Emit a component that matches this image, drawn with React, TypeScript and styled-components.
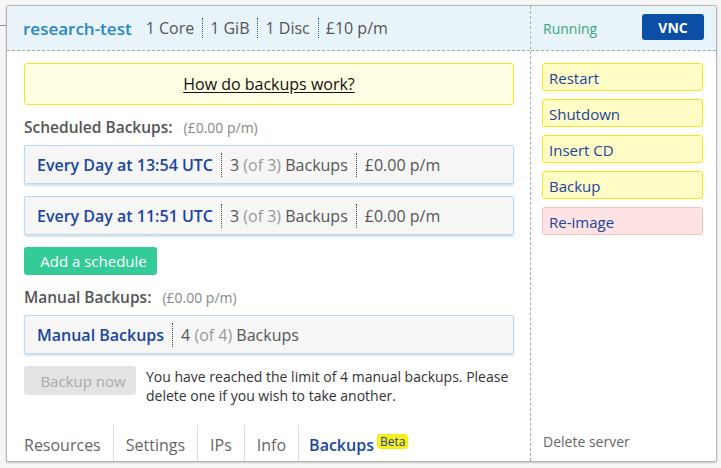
import React from "react";
import styled, { createGlobalStyle } from "styled-components";

const Global = createGlobalStyle`
  html, body { margin: 0; padding: 0; }
  body {
    background: #f6f6f6 linear-gradient(#8a8a8a, #8a8a8a) 0 25px / 8px 1px no-repeat;
    font-family: "Open Sans", "Noto Sans", sans-serif;
    width: 721px;
    height: 468px;
    overflow: hidden;
  }
`;

const Page = styled.div`
  padding: 5px 5px 0 6px;
`;

const Card = styled.div`
  width: 709px;
  height: 455px;
  background: #fff;
  border: 1px solid #b4b4b4;
  border-radius: 2px;
  box-shadow: 0 1px 2px rgba(0, 0, 0, 0.2);
  display: flex;
`;

const LeftCol = styled.div`
  width: 523px;
  display: flex;
  flex-direction: column;
  border-right: 1px dashed #aaa;
`;

const RightCol = styled.div`
  flex: 1;
  display: flex;
  flex-direction: column;
`;

const Header = styled.div`
  height: 44px;
  background: #e8f3fa;
  border-bottom: 1px dashed #a9a9a9;
  display: flex;
  align-items: center;
  flex-shrink: 0;
`;

const LeftHeader = styled(Header)`
  padding: 0 0 0 16px;
`;

const RightHeader = styled(Header)`
  padding: 0 12px 0 12px;
  justify-content: space-between;
`;

const ServerName = styled.span`
  color: #2a86c8;
  font-weight: 600;
  font-size: 17px;
  margin-right: 14px;
`;

const Spec = styled.span<{ $first?: boolean }>`
  font-size: 16px;
  color: #555;
  padding: 0 8px;
  line-height: 20px;
  border-left: ${(p) => (p.$first ? "none" : "1px dotted #2a5aa8")};
  padding-left: ${(p) => (p.$first ? "0" : "7px")};
`;

const Body = styled.div`
  flex: 1;
  padding: 12px 16px 0 17px;
  display: flex;
  flex-direction: column;
`;

const InfoBox = styled.div`
  height: 40px;
  background: #fffde4;
  border: 1px solid #f5ea1e;
  border-radius: 3px;
  display: flex;
  align-items: center;
  justify-content: center;
`;

const InfoLink = styled.a`
  color: #111;
  font-size: 16px;
  text-decoration: underline;
  text-underline-offset: 2px;
`;

const SectionTitle = styled.div<{ $top: number }>`
  margin-top: ${(p) => p.$top}px;
  height: 20px;
  display: flex;
  align-items: baseline;
  gap: 11px;
`;

const TitleText = styled.span`
  font-weight: 600;
  font-size: 15.5px;
  color: #555;
`;

const TitleCost = styled.span`
  font-size: 14px;
  color: #888;
`;

const BackupRow = styled.div<{ $top: number }>`
  margin-top: ${(p) => p.$top}px;
  height: 37px;
  background: #f6f6f6;
  border: 1px solid #b9d8f2;
  border-radius: 2px;
  box-shadow: 0 2px 2px rgba(140, 170, 200, 0.35);
  display: flex;
  align-items: center;
  padding-left: 12px;
`;

const RowCell = styled.span<{ $primary?: boolean; $first?: boolean }>`
  font-size: 16px;
  line-height: 24px;
  color: ${(p) => (p.$primary ? "#1a45a0" : "#555")};
  font-weight: ${(p) => (p.$primary ? 600 : 400)};
  padding: 0 8px 0 ${(p) => (p.$first ? "0" : "8px")};
  border-left: ${(p) => (p.$first ? "none" : "1px dotted #444")};
`;

const Muted = styled.span`
  color: #999;
`;

const Button = styled.button<{ $variant: "green" | "disabled" }>`
  height: 28px;
  border: none;
  border-radius: 3px;
  font-family: inherit;
  font-size: 15px;
  padding: 0 0 0 6px;
  background: ${(p) => (p.$variant === "green" ? "#33cb98" : "#e3e3e3")};
  color: ${(p) => (p.$variant === "green" ? "#fff" : "#aaa")};
  flex-shrink: 0;
`;

const AddButton = styled(Button)`
  margin-top: 12px;
  align-self: flex-start;
  width: 133px;
`;

const ManualActions = styled.div`
  margin-top: 12px;
  display: flex;
  gap: 10px;
  align-items: flex-start;
`;

const NowButton = styled(Button)`
  width: 112px;
  height: 29px;
`;

const LimitText = styled.p`
  margin: 0;
  font-size: 14px;
  line-height: 19px;
  color: #333;
  padding-top: 1px;
`;

const Tabs = styled.nav`
  margin: auto 0 0 -17px;
  height: 36px;
  display: flex;
  padding-left: 17px;
`;

const Tab = styled.div<{ $active?: boolean; $first?: boolean }>`
  display: flex;
  align-items: center;
  font-size: 16px;
  color: ${(p) => (p.$active ? "#1a45a0" : "#666")};
  font-weight: ${(p) => (p.$active ? 600 : 400)};
  padding: 3px 12px 0 ${(p) => (p.$first ? "0" : p.$active ? "10px" : "12px")};
  border-left: ${(p) => (p.$first ? "none" : "1px solid #ddd")};
`;

const Beta = styled.span`
  background: #f7ee17;
  color: #1a45a0;
  font-size: 12px;
  font-weight: 400;
  border-radius: 3px;
  padding: 0 3px;
  line-height: 15px;
  margin-left: 3px;
  align-self: flex-start;
  margin-top: 6px;
`;

const Status = styled.span`
  color: #3aa878;
  font-size: 14px;
`;

const Vnc = styled.button`
  width: 62px;
  height: 26px;
  border: none;
  border-radius: 3px;
  background: #0a4ea6;
  color: #fff;
  font-family: inherit;
  font-weight: 700;
  font-size: 14px;
  margin-top: -2px;
`;

const Actions = styled.div`
  flex: 1;
  padding: 12px 12px 0 11px;
  display: flex;
  flex-direction: column;
  gap: 8px;
`;

const ActionButton = styled.button<{ $danger?: boolean }>`
  height: 28px;
  width: 161px;
  text-align: left;
  padding: 1px 6px 0;
  border-radius: 3px;
  border: 1px solid ${(p) => (p.$danger ? "#f4c2c0" : "#f3ea1a")};
  background: ${(p) => (p.$danger ? "#fde3e3" : "#fffcc6")};
  color: #1a45a0;
  font-family: inherit;
  font-size: 15px;
`;

const DeleteServer = styled.div`
  margin-top: auto;
  padding: 0 0 10px 1px;
  font-size: 14px;
  color: #666;
`;

export default function App() {
  return (
    <>
      <Global />
      <Page>
        <Card>
          <LeftCol>
            <LeftHeader>
              <ServerName>research-test</ServerName>
              <Spec $first>1 Core</Spec>
              <Spec>1 GiB</Spec>
              <Spec>1 Disc</Spec>
              <Spec>£10 p/m</Spec>
            </LeftHeader>
            <Body>
              <InfoBox>
                <InfoLink>How do backups work?</InfoLink>
              </InfoBox>
              <SectionTitle $top={11}>
                <TitleText>Scheduled Backups:</TitleText>
                <TitleCost>(£0.00 p/m)</TitleCost>
              </SectionTitle>
              <BackupRow $top={9}>
                <RowCell $primary $first>Every Day at 13:54 UTC</RowCell>
                <RowCell>
                  3 <Muted>(of 3)</Muted> Backups
                </RowCell>
                <RowCell>£0.00 p/m</RowCell>
              </BackupRow>
              <BackupRow $top={12}>
                <RowCell $primary $first>Every Day at 11:51 UTC</RowCell>
                <RowCell>
                  3 <Muted>(of 3)</Muted> Backups
                </RowCell>
                <RowCell>£0.00 p/m</RowCell>
              </BackupRow>
              <AddButton $variant="green">Add a schedule</AddButton>
              <SectionTitle $top={11}>
                <TitleText>Manual Backups:</TitleText>
                <TitleCost>(£0.00 p/m)</TitleCost>
              </SectionTitle>
              <BackupRow $top={9}>
                <RowCell $primary $first>Manual Backups</RowCell>
                <RowCell>
                  4 <Muted>(of 4)</Muted> Backups
                </RowCell>
              </BackupRow>
              <ManualActions>
                <NowButton $variant="disabled">Backup now</NowButton>
                <LimitText>
                  You have reached the limit of 4 manual backups. Please
                  <br />
                  delete one if you wish to take another.
                </LimitText>
              </ManualActions>
              <Tabs>
                <Tab $first>Resources</Tab>
                <Tab>Settings</Tab>
                <Tab>IPs</Tab>
                <Tab>Info</Tab>
                <Tab $active>
                  Backups<Beta>Beta</Beta>
                </Tab>
              </Tabs>
            </Body>
          </LeftCol>
          <RightCol>
            <RightHeader>
              <Status>Running</Status>
              <Vnc>VNC</Vnc>
            </RightHeader>
            <Actions>
              <ActionButton>Restart</ActionButton>
              <ActionButton>Shutdown</ActionButton>
              <ActionButton>Insert CD</ActionButton>
              <ActionButton>Backup</ActionButton>
              <ActionButton $danger>Re-image</ActionButton>
              <DeleteServer>Delete server</DeleteServer>
            </Actions>
          </RightCol>
        </Card>
      </Page>
    </>
  );
}
